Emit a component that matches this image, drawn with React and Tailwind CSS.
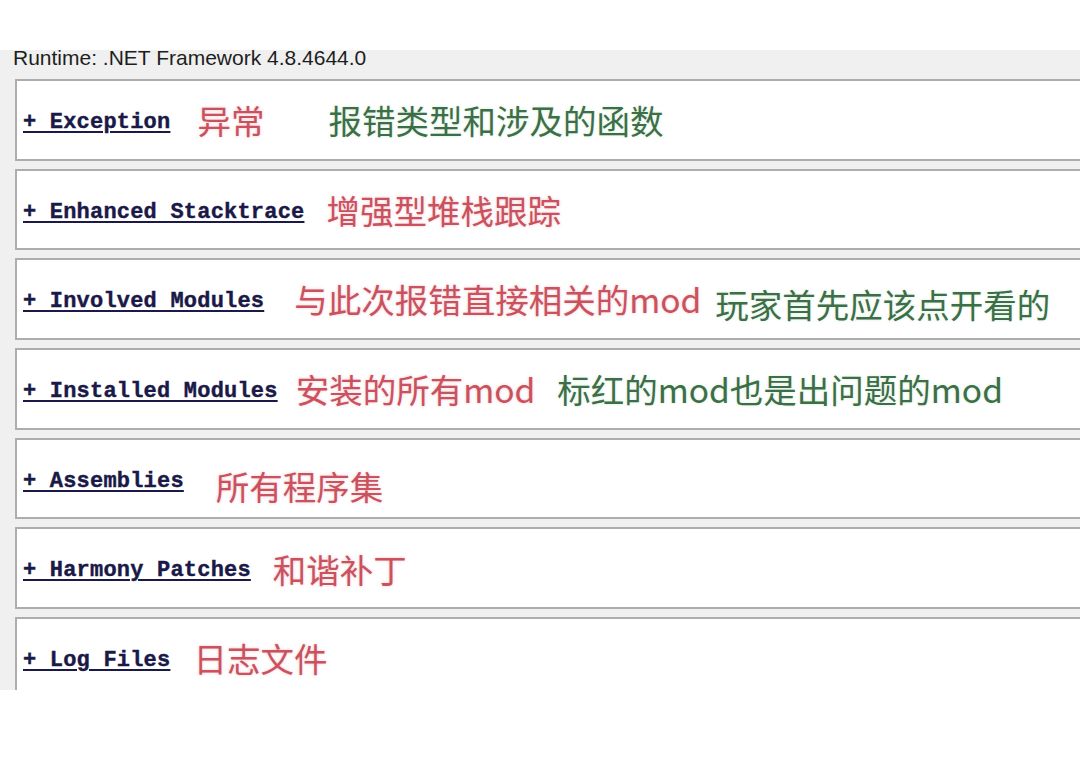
const rows = [
  {
    label: "+ Exception",
    notes: [
      { text: "异常", tone: "red", ml: "ml-[27px]" },
      { text: "报错类型和涉及的函数", tone: "green", ml: "ml-[64px]" },
    ],
  },
  {
    label: "+ Enhanced Stacktrace",
    notes: [{ text: "增强型堆栈跟踪", tone: "red", ml: "ml-[22px]" }],
  },
  {
    label: "+ Involved Modules",
    notes: [
      { text: "与此次报错直接相关的mod", tone: "red", ml: "ml-[30px]" },
      { text: "玩家首先应该点开看的", tone: "green", ml: "ml-[14px]", shift: "mt-[10px]" },
    ],
  },
  {
    label: "+ Installed Modules",
    notes: [
      { text: "安装的所有mod", tone: "red", ml: "ml-[18px]" },
      { text: "标红的mod也是出问题的mod", tone: "green", ml: "ml-[22px]" },
    ],
  },
  {
    label: "+ Assemblies",
    notes: [{ text: "所有程序集", tone: "red", ml: "ml-[32px]", shift: "mt-[14px]" }],
  },
  {
    label: "+ Harmony Patches",
    notes: [{ text: "和谐补丁", tone: "red", ml: "ml-[22px]" }],
  },
  {
    label: "+ Log Files",
    notes: [{ text: "日志文件", tone: "red", ml: "ml-[23px]" }],
  },
];

const toneClass = {
  red: "text-[#c9525e] [text-shadow:0_0_3px_rgba(235,140,150,0.5)]",
  green: "text-[#3d6e47] [text-shadow:0_0_3px_rgba(140,210,150,0.4)]",
};

function Section({ label, notes }) {
  return (
    <div className="h-[81.7px] shrink-0 flex items-center bg-white border-2 border-r-0 border-[#adadad] pl-[6px]">
      <a
        href="#"
        className="translate-y-[3px] font-['Liberation_Mono',monospace] font-bold text-[22px] leading-none tracking-[0.2px] text-[#1a1947] underline decoration-2 underline-offset-[3px] whitespace-pre [-webkit-text-stroke:0.4px_#1a1947]"
      >
        {label}
      </a>
      {notes.map((n) => (
        <span
          key={n.text}
          className={`${n.ml} ${n.shift ?? ""} font-['Noto_Sans_CJK_SC','Microsoft_YaHei',sans-serif] text-[33.5px] leading-none whitespace-nowrap ${toneClass[n.tone]}`}
        >
          {n.text}
        </span>
      ))}
    </div>
  );
}

export default function App() {
  return (
    <div className="w-[1080px] h-[765px] bg-white overflow-hidden">
      <div className="h-[50px]" />
      <div className="h-[640px] bg-[#f0f0f0] overflow-hidden flex flex-col">
        <div className="-mt-[2px] pl-[13px] h-[20px] leading-[20px] text-[21px] text-[#1e1e1e] font-['Liberation_Sans',Arial,sans-serif] whitespace-nowrap">
          Runtime: .NET Framework 4.8.4644.0
        </div>
        <div className="mt-[11px] ml-[15px] flex flex-col gap-2">
          {rows.map((r) => (
            <Section key={r.label} {...r} />
          ))}
        </div>
      </div>
    </div>
  );
}
